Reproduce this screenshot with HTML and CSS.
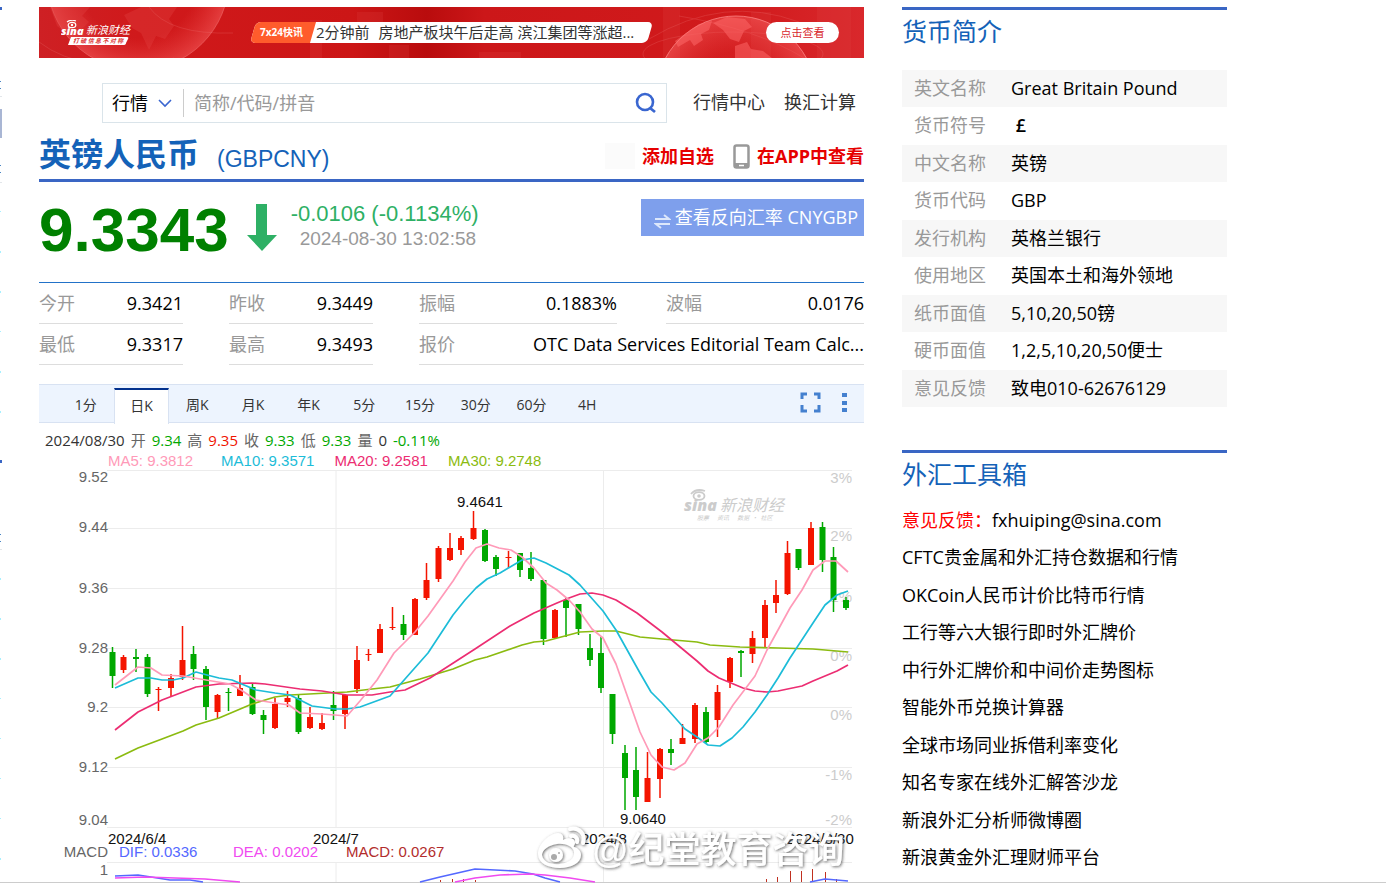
FILE: index.html
```html
<!DOCTYPE html>
<html lang="zh-CN">
<head>
<meta charset="utf-8">
<title>英镑人民币 (GBPCNY)</title>
<link rel="stylesheet" href="styles.css">
</head>
<body>
<div class="page">
  <svg class="edge" width="3" height="882" viewBox="0 0 3 882" aria-hidden="true">
    <path fill="#3a66c4" d="M0 7h2v3H0zM0 460h2v3H0z"/>
    <path fill="#a9b6d4" d="M0 109h2v29H0z"/>
    <path fill="#4a86c4" d="M0 81h1v1H0zM0 88h1v1H0zM0 165h1v1H0zM0 172h1v1H0zM0 534h1v1H0zM0 541h1v1H0z"/>
    <path fill="#e2e6ea" d="M0 96h2v1H0zM0 182h2v1H0zM0 549h2v1H0z"/>
    <path fill="#a8f0ff" d="M0 211h1v1H0zM0 251h1v2H0zM0 291h1v2H0zM0 331h1v1H0zM0 371h1v2H0zM0 411h1v2H0zM0 578h1v2H0zM0 618h1v2H0zM0 658h1v2H0zM0 698h1v1H0zM0 738h1v1H0zM0 778h1v1H0zM0 818h1v1H0zM0 858h1v2H0z"/>
  </svg>

  <main class="main">
    <section class="banner" aria-label="7x24快讯">
      <svg class="banner-art" viewBox="0 0 825 51" preserveAspectRatio="xMidYMid slice" aria-hidden="true">
        <defs>
          <linearGradient id="red" x1="0" x2="1">
            <stop offset="0" stop-color="#ce2024"/><stop offset=".12" stop-color="#d0191b"/>
            <stop offset=".38" stop-color="#cc1616"/><stop offset=".47" stop-color="#b90c0d"/>
            <stop offset=".54" stop-color="#cc1719"/><stop offset=".85" stop-color="#d11a1c"/>
            <stop offset="1" stop-color="#d9282c"/>
          </linearGradient>
          <radialGradient id="globeA"><stop offset=".65" stop-color="#f04848" stop-opacity="0"/><stop offset="1" stop-color="#f55b5b" stop-opacity=".55"/></radialGradient>
          <radialGradient id="globeB"><stop offset=".55" stop-color="#f04848" stop-opacity=".1"/><stop offset="1" stop-color="#f55b5b" stop-opacity=".55"/></radialGradient>
        </defs>
        <path fill="url(#red)" d="M0 0h825v51H0z"/>
        <g fill="#e04444" opacity=".2"><path d="M271 13h12v38h-12zM350 38h20v13h-20zM318 5h26v18h-26zM440 45h42v6h-42zM624 0h17v51h-17zM712 5h20v46h-20zM778 0h34v51h-34z"/></g>
        <circle cx="99" cy="-28" r="91" fill="url(#globeA)"/>
        <circle cx="99" cy="-28" r="91" fill="none" stroke="#f07070" opacity=".55"/>
        <path fill="#e34141" opacity=".35" d="M11 0h40l-8 9 7 6-8 8-8-6-4 11-12-9zM85 8l17-8h36l-8 12 5 7-9 13-9-3-7 14-8-17-9-5z"/>
        <g fill="none" stroke="#ed7272" opacity=".25"><path d="M0 35q45 35 135 16M110 0q20 28 84 26M610 32q75-45 150-17M640 9q78 13 125 42"/><ellipse cx="694" cy="47" rx="90" ry="22"/></g>
        <circle cx="697" cy="89" r="80" fill="url(#globeB)"/>
        <circle cx="697" cy="89" r="80" fill="none" stroke="#ff8a8a" opacity=".75"/>
        <path fill="#ff6c6c" opacity=".5" d="M643 29l17-12 13-3-3 9-8 4 2 6-9 6-4-6-12 7-3-6zM674 16l14-6 18 2 7 8-8 4-5 11-9-3-7-9zM696 39l12-4 4 7 12 2 9 7h-37z"/>
      </svg>
      <svg class="banner-logo" width="70" height="26" viewBox="0 0 70 26" role="img" aria-label="新浪财经 打破信息不对称">
        <g fill="none" stroke="#fff" stroke-width="1.2"><ellipse cx="11" cy="5" rx="3.8" ry="2.6"/><path d="M6 2q4-3 9-1"/></g><circle cx="11" cy="5" r="1.2" fill="#fff"/>
        <text class="logo-latin" x="0" y="15" font-size="11">sina</text>
        <text class="logo-cn" x="25" y="14" font-size="11">新浪财经</text>
        <path fill="#fff" d="M10 17h56q2 0 1 2l-2 4q0 2-3 2H7z"/>
        <text class="logo-tag" x="12" y="23" font-size="6">打 破 信 息 不 对 称</text>
      </svg>
      <div class="ticker">
        <span class="ticker-badge">7x24快讯</span>
        <a class="ticker-news" href="#news"><span>2分钟前</span><span>房地产板块午后走高 滨江集团等涨超...</span></a>
      </div>
      <button class="banner-btn" type="button">点击查看</button>
    </section>

    <div class="search-row">
      <form class="search">
        <select class="search-type" aria-label="类别"><option>行情</option></select>
        <svg class="chevron" width="14" height="9" viewBox="0 0 14 9" aria-hidden="true"><path d="M1 1l6 6 6-6" fill="none" stroke="#3a66d0" stroke-width="1.6"/></svg>
        <input class="search-input" type="text" placeholder="简称/代码/拼音" aria-label="简称/代码/拼音">
        <button class="search-btn" type="button" aria-label="搜索"><svg width="22" height="22" viewBox="0 0 22 22"><circle cx="10" cy="10" r="8" fill="none" stroke="#3a66d0" stroke-width="2.6"/><path d="M15 16l5 4" stroke="#3a66d0" stroke-width="2.8"/></svg></button>
      </form>
      <a class="quick" href="#quotes">行情中心</a>
      <a class="quick" href="#convert">换汇计算</a>
    </div>

    <header class="title-row">
      <h1>英镑人民币</h1>
      <span class="code">(GBPCNY)</span>
      <a class="action add" href="#add">添加自选</a>
      <a class="action" href="#app"><svg width="17" height="25" viewBox="0 0 17 25" aria-hidden="true"><rect x="1.500" y="1.500" width="14" height="22" rx="2" fill="#fff" stroke="#999" stroke-width="2.500"/><path d="M1 19h15v4q0 1-1 1H2q-1 0-1-1z" fill="#999"/><path d="M6 21.500h5" stroke="#fff" stroke-width="1.500"/></svg>在APP中查看</a>
    </header>

    <section class="price-row">
      <strong class="price">9.3343</strong>
      <svg class="arrow" width="32" height="48" viewBox="0 0 32 48" aria-label="下跌"><path fill="#2eb065" d="M10 0h11v31h10L16 47 1 31h9z"/></svg>
      <div class="change"><span class="delta">-0.0106 (-0.1134%)</span><time>2024-08-30 13:02:58</time></div>
      <a class="reverse" href="#reverse"><svg width="17" height="17" viewBox="0 0 17 17" aria-hidden="true"><path d="M1 6h14l-5-4M16 11H2l5 4" fill="none" stroke="#dce7fb" stroke-width="2"/></svg>查看反向汇率 CNYGBP</a>
    </section>

    <dl class="stats">
      <div><dt>今开</dt><dd>9.3421</dd></div>
      <div><dt>昨收</dt><dd>9.3449</dd></div>
      <div><dt>振幅</dt><dd>0.1883%</dd></div>
      <div class="last"><dt>波幅</dt><dd>0.0176</dd></div>
      <div><dt>最低</dt><dd>9.3317</dd></div>
      <div><dt>最高</dt><dd>9.3493</dd></div>
      <div class="wide"><dt>报价</dt><dd>OTC Data Services Editorial Team Calc...</dd></div>
    </dl>

    <nav class="tabs">
      <div class="periods"><button type="button">1分</button><button type="button" class="active">日K</button><button type="button">周K</button><button type="button">月K</button><button type="button">年K</button><button type="button">5分</button><button type="button">15分</button><button type="button">30分</button><button type="button">60分</button><button type="button">4H</button></div>
      <button type="button" class="tool first" aria-label="全屏"><svg width="21" height="21" viewBox="0 0 21 21"><path d="M7 2H2v5M14 2h5v5M2 13v6h5M14 19h5v-6" fill="none" stroke="#4480cf" stroke-width="3"/></svg></button>
      <button type="button" class="tool" aria-label="更多"><svg width="5" height="21" viewBox="0 0 5 21"><path fill="#4480cf" d="M0 1h5v4H0zM0 9h5v4H0zM0 16h5v4H0z"/></svg></button>
    </nav>

    <p class="quote"><span>2024/08/30</span><i>开</i><b class="g">9.34</b><i>高</i><b class="r">9.35</b><i>收</i><b class="g">9.33</b><i>低</i><b class="g">9.33</b><i>量</i><span>0</span><b class="g">-0.11%</b></p>
    <p class="ma"><span class="ma5">MA5: 9.3812</span><span class="ma10">MA10: 9.3571</span><span class="ma20">MA20: 9.2581</span><span class="ma30">MA30: 9.2748</span></p>

    <svg class="chart" viewBox="39 470 825 412" role="img" aria-label="GBPCNY 日K">
      <defs><filter id="glow" x="-5%" y="-20%" width="110%" height="140%"><feDropShadow dx="1" dy="1" stdDeviation="1.500" flood-color="#555" flood-opacity=".85"/></filter></defs>
      <path class="grid" d="M107 470.500H852M107 528.500H852M107 588.500H852M107 648.500H852M107 707.500H852M107 767.500H852M107 827.500H852M107 862.500H852M336 470V827M336 862V882M603.500 470V827M603.500 862V882"/>
      <g class="brand">
        <g fill="none" stroke="#ccc" stroke-width="1.8"><ellipse cx="699" cy="496" rx="5.500" ry="3.800"/><path d="M691 494q5-6 14-3"/></g><circle cx="699" cy="496" r="1.800"/>
        <text class="logo-latin" x="684" y="511" font-size="16">sina</text><text class="logo-cn" x="720" y="511" font-size="16">新浪财经</text>
        <text class="logo-cn" x="697" y="520" font-size="6" xml:space="preserve">股票      资讯      数据  ·  社区</text>
      </g>
      <g class="pct"><text x="852" y="483">3%</text><text x="852" y="541">2%</text><text x="852" y="602">1%</text><text x="852" y="661">0%</text><text x="852" y="720">0%</text><text x="852" y="780">-1%</text><text x="852" y="825">-2%</text></g>
      <g class="axis"><text x="108" y="482">9.52</text><text x="108" y="532">9.44</text><text x="108" y="593">9.36</text><text x="108" y="653">9.28</text><text x="108" y="712">9.2</text><text x="108" y="772">9.12</text><text x="108" y="825">9.04</text><text x="108" y="857">MACD</text><text x="108" y="875">1</text></g>
      <path class="wick up" d="M123.500 655V673M158.500 687V711M171 674V696M182.500 626V680M217.500 694V719M240 675V696M275 698V729M287.500 691V707M310 707V729M322 713V730M345 694V729M357 646V693M368.500 649V661M380 624V653M392.500 607V630M415 598V635M426.500 563V600M438.500 546V582M450 533V561M461 536V555M473.500 511V540M508.500 551V568M555 609V639M647.500 752V802M660 748V798M682.500 724V744M695 703V743M717.500 685V737M730 657V688M752.500 631V663M765 600V648M776 580V613M787.500 541V595M811 522V565"/>
      <path class="wick down" d="M112.500 647V688M136 649V672M147.500 654V697M193.500 646V680M206 666V720M228.500 688V711M252.500 684V715M263.500 710V734M298.500 694V734M333.500 691V720M403.500 615V640M485 529V562M496 555V576M520 553V577M531 552V581M543.500 580V645M566 598V637M578.500 604V635M590 634V666M601 637V693M612.500 694V744M625 745V810M636 747V810M671 739V765M706 707V743M741 650V677M798.500 549V570M822.500 522V572M833.500 547V612M846 597V610"/>
      <path class="candle up" d="M123.500 657V670M158.500 689V690M171 678V688M182.500 660V677M217.500 695V712M240 688V696M275 704V728M287.500 698V702M310 717V728M322 723V729M345 695V714M357 660V689M368.500 654V655M380 629V653M392.500 627V628M415 599V635M426.500 580V598M438.500 548V579M450 548V560M461 538V550M473.500 528V539M508.500 557V558M555 610V638M647.500 778V802M660 749V779M682.500 738V744M695 705V739M717.500 692V720M730 658V682M752.500 638V654M765 605V638M776 595V603M787.500 553V594M811 528V565"/>
      <path class="candle down" d="M112.500 652V676M136 657V659M147.500 657V694M193.500 654V669M206 669V707M228.500 692V693M252.500 687V714M263.500 715V720M298.500 698V732M333.500 705V711M403.500 624V635M485 530V561M496 557V569M520 553V570M531 568V579M543.500 580V639M566 600V608M578.500 604V629M590 648V660M601 653V688M612.500 694V734M625 753V778M636 770V797M671 749V753M706 712V742M741 651V653M798.500 549V568M822.500 527V560M833.500 557V600M846 600V608"/>
      <polyline class="line l30" points="115,759 138,748 162,739 183,731 196,725 219,718 252,704 275,697 290,695 347,692 372,689 390,687 405,683 420,679 453,669 475,660 487,657 522,645 534,642 546,641 580,632 603,631 616,631 640,637 662,639 697,642 710,645 740,647 778,648 813,649 825,650 848,652"/>
      <polyline class="line l20" points="115,730 138,712 162,700 196,687 219,684 252,683 265,684 300,689 322,691 347,695 372,695 390,692 405,690 430,678 475,649 510,626 534,613 557,603 569,598 580,594 592,593 603,595 616,600 637,613 662,632 697,661 708,671 719,678 743,688 755,691 767,692 778,691 802,686 813,681 837,671 848,665"/>
      <polyline class="line l10" points="115,688 138,678 151,678 162,680 173,680 183,678 196,672 207,675 219,678 232,680 256,690 275,693 290,695 312,706 335,709 347,709 360,707 390,696 405,679 428,653 453,615 465,600 476,588 487,579 500,573 522,560 534,558 546,563 569,575 580,585 603,611 616,630 640,673 651,692 662,703 685,729 697,737 708,745 720,746 732,738 743,727 755,712 767,695 778,678 790,658 813,623 825,605 837,595 848,591"/>
      <polyline class="line l5" points="115,685 138,667 151,668 162,675 183,676 206,680 230,684 241,690 256,700 275,703 289,705 300,713 322,714 347,716 360,701 377,680 394,653 415,632 428,616 453,581 465,562 476,548 487,544 499,548 511,550 522,557 534,568 546,583 557,590 569,600 580,612 592,629 603,638 616,664 640,732 651,755 662,767 674,770 685,763 697,744 708,738 719,727 733,705 755,676 767,650 778,630 790,608 802,590 813,570 825,561 836,561 848,572"/>
      <g class="mark"><text x="457" y="507">9.4641</text><text x="620" y="824">9.0640</text><text x="108" y="844">2024/6/4</text><text x="313" y="844">2024/7</text><text x="581" y="844">2024/8</text><text x="787" y="844">2024/8/30</text></g>
      <g class="macd"><text x="119" y="857" fill="#5468ff">DIF: 0.0336</text><text x="233" y="857" fill="#f04af0">DEA: 0.0202</text><text x="346" y="857" fill="#b22c2c">MACD: 0.0267</text></g>
      <path class="hist" d="M440.500 880V882M452.500 879V882M463.500 879V882M475.500 880V882M766.500 879V882M777.500 877V882M790.500 871V882M801.500 871V882M812.500 869V882M825.500 872V882M836.500 879V882"/>
      <path class="line dif" d="M115 876L138 875 151 877 170 880 190 880 203 882M420 882L440 877 475 869 515 871 533 874 545 878 560 882M810 882L825 879 848 881"/>
      <path class="line dea" d="M115 878L145 877 205 879 240 882M455 882L475 878 500 875 530 874 545 875 570 878 595 882"/>
      <g class="watermark" filter="url(#glow)">
        <path d="M538 854c0-9 10-20 20-21 4 0 6 3 5 7 6-3 12-2 12 3 0 2-2 3-1 4 4 1 7 4 7 8 0 8-10 13-21 13-12 0-22-5-22-14zm4 1c1 7 9 10 18 9 9-1 15-6 14-12-1-6-9-9-17-8-8 1-15 6-15 11z"/>
        <path fill="none" stroke="#fff" stroke-width="4" stroke-linecap="round" d="M570 829c9-2 16 5 13 14M571 836c4-1 7 2 6 6"/>
        <circle cx="556" cy="855" r="7"/><circle cx="554" cy="857" r="3" fill="#aaa"/><circle cx="559" cy="853" r="1" fill="#aaa"/>
        <text x="592" y="863" font-size="36">@纪堂教育咨询</text>
      </g>
    </svg>
  </main>

  <aside class="side">
    <section class="intro">
      <h2>货币简介</h2>
      <table>
        <tr><th scope="row">英文名称</th><td>Great Britain Pound</td></tr>
        <tr><th scope="row">货币符号</th><td class="symbol">&nbsp;£</td></tr>
        <tr><th scope="row">中文名称</th><td>英镑</td></tr>
        <tr><th scope="row">货币代码</th><td>GBP</td></tr>
        <tr><th scope="row">发行机构</th><td>英格兰银行</td></tr>
        <tr><th scope="row">使用地区</th><td>英国本土和海外领地</td></tr>
        <tr><th scope="row">纸币面值</th><td>5,10,20,50镑</td></tr>
        <tr><th scope="row">硬币面值</th><td>1,2,5,10,20,50便士</td></tr>
        <tr><th scope="row">意见反馈</th><td>致电010-62676129</td></tr>
      </table>
    </section>
    <section class="toolbox">
      <h2>外汇工具箱</h2>
      <ul>
        <li><em>意见反馈：</em><a href="#mail">fxhuiping@sina.com</a></li>
        <li><a href="#1">CFTC贵金属和外汇持仓数据和行情</a></li>
        <li><a href="#2">OKCoin人民币计价比特币行情</a></li>
        <li><a href="#3">工行等六大银行即时外汇牌价</a></li>
        <li><a href="#4">中行外汇牌价和中间价走势图标</a></li>
        <li><a href="#5">智能外币兑换计算器</a></li>
        <li><a href="#6">全球市场同业拆借利率变化</a></li>
        <li><a href="#7">知名专家在线外汇解答沙龙</a></li>
        <li><a href="#8">新浪外汇分析师微博圈</a></li>
        <li><a href="#9">新浪黄金外汇理财师平台</a></li>
      </ul>
    </section>
  </aside>
</div>
</body>
</html>
```

FILE: styles.css
```css
* { box-sizing: border-box; }
body { margin: 0; background: #fff; color: #000; font: 18px/24px "Open Sans", "Noto Sans CJK SC", sans-serif; }
h1, h2, p, dl, dd, ul { margin: 0; padding: 0; }
a { color: inherit; text-decoration: none; }
button, input, select { font: inherit; color: inherit; border: 0; background: none; padding: 0; margin: 0; }
button { cursor: pointer; }
svg { display: block; }

.page { display: grid; grid-template-columns: 39px minmax(0, 825fr) minmax(0, 363fr); padding-right: 159px; min-height: 100vh; border-bottom: 1px solid #ccc; }
.main { padding-top: 7px; }
.side { padding-top: 7px; margin-left: 38px; }

.banner { position: relative; display: flex; align-items: center; height: 51px; padding: 0 25px 0 22px; }
.banner-art { position: absolute; inset: 0; width: 100%; height: 100%; }
.banner-logo, .ticker, .banner-btn { position: relative; }
.logo-latin { font-family: "Open Sans", sans-serif; font-weight: 800; font-style: italic; fill: #fff; }
.logo-cn { font-family: "Noto Sans CJK SC", sans-serif; font-style: italic; fill: #fff; }
.logo-tag { font-family: "Noto Sans CJK SC", sans-serif; font-weight: 700; font-style: italic; fill: #d33; }
.ticker { display: flex; width: 403px; height: 21px; margin-left: 119px; line-height: 21px; }
.ticker::before, .ticker::after { content: ""; position: absolute; top: 0; bottom: 0; transform: skewX(-16deg); }
.ticker::before { left: 3px; right: 3px; background: #fff; border-radius: 5px; }
.ticker::after { left: 3px; width: 60px; background: #ff5c2c; border-radius: 5px 0 0 5px; }
.ticker-badge { position: relative; z-index: 1; width: 66px; padding-left: 10px; color: #fff; font-size: 10px; font-weight: 700; white-space: nowrap; }
.ticker-news { position: relative; z-index: 1; display: flex; gap: 9px; color: #333; font-size: 15px; white-space: nowrap; }
.banner-btn { width: 73px; height: 21px; margin-left: auto; border-radius: 11px; background: #fff; color: #d8282c; font-size: 11px; line-height: 21px; }

.search-row { display: flex; align-items: center; margin-top: 25px; padding: 0 8px 0 63px; }
.search { display: flex; align-items: center; flex: 1; min-width: 0; height: 40px; border: 1px solid #dae4ea; }
.search-type { width: 46px; margin-left: 9px; appearance: none; }
.chevron { margin: 0 11px 0 0; }
.search-input { flex: 1; min-width: 0; height: 28px; padding-left: 10px; border-left: 1px solid #ccc; outline: 0; }
.search-input::placeholder { color: #999; opacity: 1; }
.search-btn { margin-right: 9px; }
.quick { margin: 0 0 3px 19px; color: #333; }
.search + .quick { margin-left: 26px; }

.title-row { display: flex; align-items: center; height: 59px; padding-top: 6px; border-bottom: 3px solid #3a66c4; color: #1462b8; }
h1 { font-size: 32px; line-height: 44px; white-space: nowrap; }
.code { margin-left: 18px; padding-top: 9px; font: 23px/28px "Liberation Sans", sans-serif; }
.action { display: flex; align-items: center; gap: 7px; margin-left: 19px; padding-top: 4px; color: #e60000; font-weight: 700; white-space: nowrap; }
.add { margin-left: auto; }
.add::before { content: ""; width: 30px; height: 26px; background: #fbfbfb; }

.price-row { display: flex; align-items: flex-start; height: 101px; padding-top: 17px; border-bottom: 1px solid #2272c8; font-family: "Liberation Sans", sans-serif; }
.price { color: #008000; font-size: 62px; line-height: 62px; }
.arrow { margin: 5px 13px 0 17px; }
.change { display: flex; flex-direction: column; padding-top: 1px; color: #2eb065; font-size: 22px; line-height: 27px; white-space: nowrap; }
.change time { padding-left: 9px; color: #999; font-size: 19px; line-height: 24px; }
.reverse { display: flex; align-items: center; gap: 4px; height: 37px; margin-left: auto; padding: 0 6px 2px 13px; background: #7e9fec; color: #fff; font-family: "Open Sans", "Noto Sans CJK SC", sans-serif; white-space: nowrap; }
.reverse svg { margin-top: 9px; }

.stats { display: grid; grid-template-columns: 144fr 144fr 198fr 201fr; column-gap: 46px; }
.stats div { display: flex; justify-content: space-between; height: 41px; line-height: 40px; border-bottom: 1px solid #ddd; white-space: nowrap; }
.stats .last { margin-left: 3px; }
.stats .wide { grid-column: 3 / 5; }
.stats dt { color: #999; }

.tabs { display: flex; height: 39px; margin-top: 19px; padding: 0 17px 0 19px; background: #edf4fe; border: solid #d8e2f2; border-width: 1px 0; }
.periods { display: grid; grid-template-columns: repeat(10, 1fr); width: 557px; }
.tabs button { color: #333; font-size: 14px; line-height: 38px; }
.tabs .active { height: 36px; margin-top: 3px; padding-bottom: 3px; background: #fff; border: 1px solid #d8e2f2; border-top: 2px solid #03318d; border-bottom: 0; line-height: 30px; position: relative; z-index: 1; }
.tabs .tool { margin-left: 21px; padding-bottom: 2px; }
.tabs .first { margin-left: auto; }

.quote { display: flex; gap: 6px; margin-top: 7px; padding-left: 6px; color: #333; font-size: 15px; line-height: 20px; white-space: nowrap; }
.quote i { font-style: normal; color: #666; }
.quote b { font-weight: 400; }
.quote .g { color: #00a800; }
.quote .r { color: #f01400; }
.ma { display: flex; gap: 28px; padding: 1px 0 0 69px; font: 15px/19px "Liberation Sans", sans-serif; white-space: nowrap; }
.ma span + span + span { margin-left: -8px; }
.ma5 { color: #ff9ab8; }
.ma10 { color: #1cbcd8; }
.ma20 { color: #ec2d72; }
.ma30 { color: #8bbb10; }

.chart { width: 100%; height: auto; overflow: visible; font: 15px "Liberation Sans", sans-serif; }
.grid { fill: none; stroke: #ececec; stroke-width: 1; }
.brand, .brand text { fill: #ccc; }
.pct { fill: #ccc; text-anchor: end; }
.axis { fill: #666; text-anchor: end; }
.mark { fill: #111; }
.wick { fill: none; stroke-width: 1.5px; }
.candle { fill: none; stroke-width: 6px; }
.up { stroke: #f41400; }
.down { stroke: #00a800; }
.line { fill: none; stroke-width: 1.7px; stroke-linejoin: round; }
.l5 { stroke: #ff9ab8; }
.l10 { stroke: #1cbcd8; }
.l20 { stroke: #ec2d72; }
.l30 { stroke: #8bbb10; }
.dif { stroke: #5468ff; }
.dea { stroke: #f04af0; }
.hist { fill: none; stroke: #c03020; }
.watermark { fill: #fff; fill-rule: evenodd; font-family: "Liberation Sans", "Noto Sans CJK SC", sans-serif; font-weight: 500; }

h2 { color: #1462b8; font-size: 25px; font-weight: 400; line-height: 42px; border-top: 3px solid #3a66c4; }
.intro table { width: 100%; margin-top: 18px; border-collapse: collapse; }
.intro th, .intro td { height: 38px; padding: 0 0 2px; font-weight: 400; line-height: 34px; text-align: left; }
.intro tr:nth-child(odd) > * { height: 37px; background: #f7f7f7; }
.intro th { width: 109px; padding-left: 12px; color: #999; }
.intro .symbol { font-weight: 600; }
.toolbox { margin-top: 43px; }
.toolbox ul { margin-top: 7px; list-style: none; }
.toolbox li { height: 38px; line-height: 37px; white-space: nowrap; }
.toolbox li:nth-child(odd) { height: 37px; }
.toolbox em { color: #f00; font-style: normal; }
```
